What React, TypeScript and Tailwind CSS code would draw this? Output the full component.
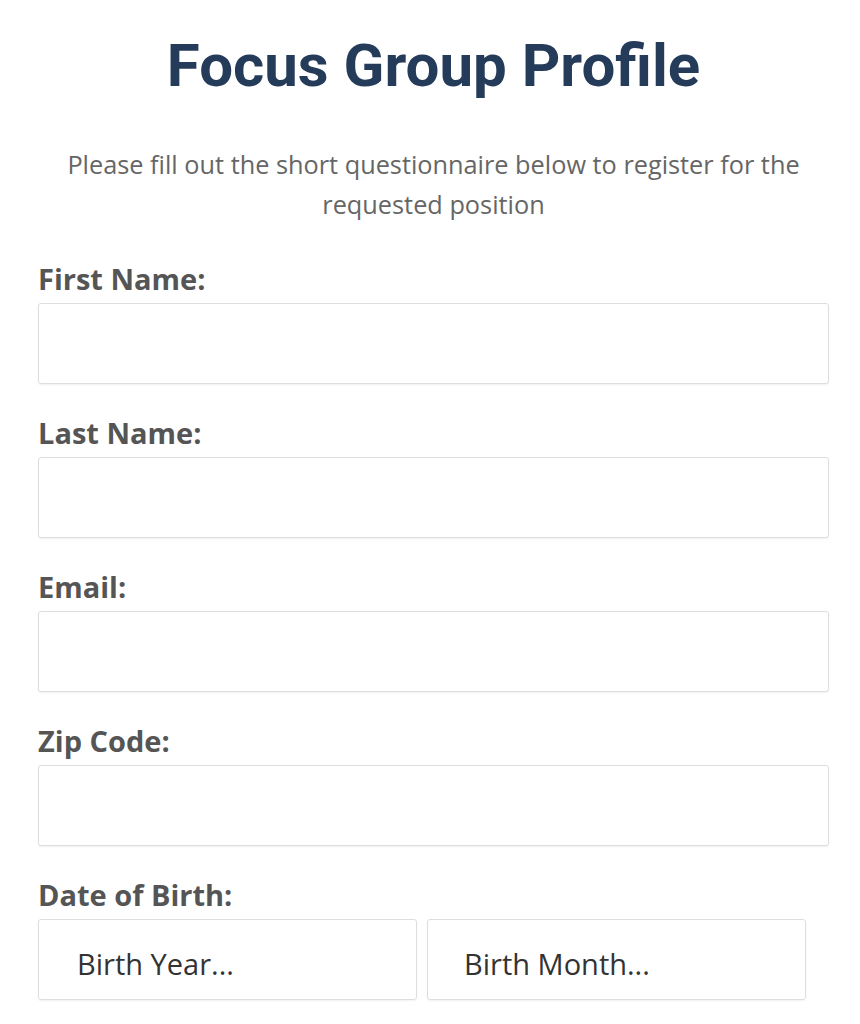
const fields = ['First Name:', 'Last Name:', 'Email:', 'Zip Code:']

export default function App() {
  return (
    <div className="min-h-screen bg-white">
      <div className="w-[791px] ml-[38px] pt-[26px]">
        <h1 className="text-center font-['Roboto',sans-serif] font-bold text-[60px] leading-[80px] text-[#243b5a]">
          Focus Group Profile
        </h1>
        <p className="mt-[38px] text-center font-['Open_Sans',sans-serif] text-[25.3px] leading-[40px] text-[#666]">
          Please fill out the short questionnaire below to register for the requested position
        </p>

        <form className="mt-[37px] font-['Open_Sans',sans-serif]">
          {fields.map((f) => (
            <div key={f} className="mb-[31px]">
              <label className="block font-bold text-[29px] leading-[36px] text-[#555] mb-[6px]">{f}</label>
              <input
                type="text"
                className="block w-full h-[81px] bg-white border border-[#dedede] rounded-[3px] shadow-[0_1px_2px_rgba(0,0,0,0.06)] outline-none"
              />
            </div>
          ))}
          <div>
            <label className="block font-bold text-[29px] leading-[36px] text-[#555] mb-[6px]">Date of Birth:</label>
            <div className="flex gap-[10px]">
              <div className="w-[379px] h-[81px] border border-[#dedede] rounded-[3px] shadow-[0_1px_2px_rgba(0,0,0,0.06)] flex items-center pl-[38px] pt-[8px] text-[29px] text-[#333]">
                Birth Year...
              </div>
              <div className="w-[379px] h-[81px] border border-[#dedede] rounded-[3px] shadow-[0_1px_2px_rgba(0,0,0,0.06)] flex items-center pl-[36px] pt-[8px] text-[29px] text-[#333]">
                Birth Month...
              </div>
            </div>
          </div>
        </form>
      </div>
    </div>
  )
}
